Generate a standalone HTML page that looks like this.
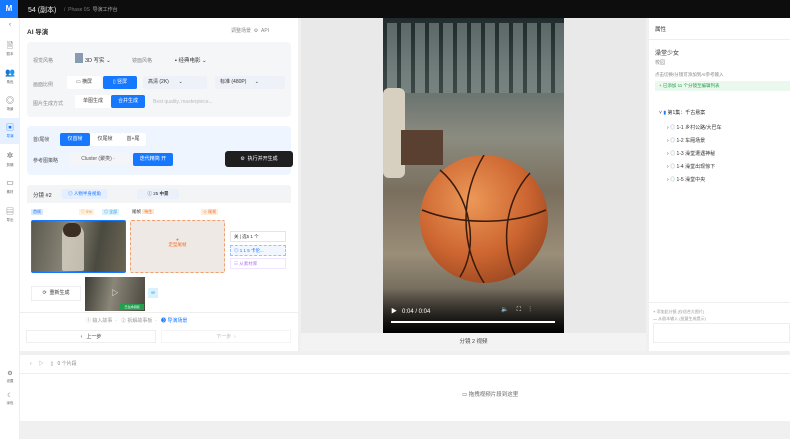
<!DOCTYPE html><html><head><meta charset="utf-8"><style>
*{box-sizing:border-box;margin:0;padding:0}
body{width:790px;height:421px;overflow:hidden;background:#f0f0f0;font-family:"Liberation Sans","Noto Sans CJK SC",sans-serif;font-size:6px;color:#333;position:relative}
.a{position:absolute}
.top{left:0;top:0;width:790px;height:18px;background:#0d0d0d;color:#ddd}
.side{left:0;top:0;width:20px;height:421px;background:#fff;border-right:1px solid #eee}
.lbl{font-size:3.5px;color:#666;text-align:center;width:20px}
.btn{position:absolute;border-radius:2px;font-size:5px;line-height:13px;height:13px;text-align:center}
.blue{background:#1677ff;color:#fff}
.wh{background:#fff;color:#444}
.gr{color:#888;font-size:5px}
</style></head><body>
<div class="a top">
 <div class="a" style="left:0;top:0;width:18px;height:18px;background:#1677ff;color:#fff;font-weight:bold;font-size:8px;line-height:18px;text-align:center">M</div>
 <div class="a" style="left:28px;top:5px;font-size:7px;color:#eee">54 (副本)</div>
 <div class="a" style="left:64px;top:6px;font-size:5px;color:#777">/ &nbsp;Phase 0S &nbsp;<span style="color:#aaa">导演工作台</span></div>
</div>
<div class="a side" style="top:18px">
 <div class="a lbl" style="top:4px;font-size:6px">‹</div>
 <div class="a lbl" style="top:22px;font-size:8px">🗎</div><div class="a lbl" style="top:34px">剧本</div>
 <div class="a lbl" style="top:50px;font-size:8px">👥</div><div class="a lbl" style="top:62px">角色</div>
 <div class="a lbl" style="top:77px;font-size:8px">◎</div><div class="a lbl" style="top:89px">场景</div>
 <div class="a" style="left:0;top:100px;width:20px;height:26px;background:#e6f0ff"></div>
 <div class="a lbl" style="top:104px;font-size:8px;color:#1677ff">▣</div><div class="a lbl" style="top:116px;color:#1677ff">导演</div>
 <div class="a lbl" style="top:133px;font-size:8px">✲</div><div class="a lbl" style="top:145px">剪辑</div>
 <div class="a lbl" style="top:160px;font-size:8px">▭</div><div class="a lbl" style="top:172px">素材</div>
 <div class="a lbl" style="top:188px;font-size:8px">▤</div><div class="a lbl" style="top:200px">导出</div>
 <div class="a lbl" style="top:352px;font-size:6px">⚙</div><div class="a lbl" style="top:361px">设置</div>
 <div class="a lbl" style="top:374px;font-size:6px">☾</div><div class="a lbl" style="top:383px">深色</div>
</div>
<!-- left panel -->
<div class="a" style="left:20px;top:18px;width:278px;height:333px;background:#fff">
 <div class="a" style="left:7px;top:8px;font-size:6.5px;font-weight:bold">AI 导演</div>
 <div class="a gr" style="left:211px;top:9px">调整场景 &nbsp;⚙ &nbsp;API</div>
 <div class="a" style="left:7px;top:24px;width:264px;height:75px;background:#f5f6f8;border-radius:4px">
  <div class="a gr" style="left:6px;top:15px">视觉风格</div>
  <div class="a" style="left:48px;top:11px;width:8px;height:10px;background:#8a9ab0"></div>
  <div class="a" style="left:58px;top:14px;font-size:5.5px">3D 写实 ⌄</div>
  <div class="a gr" style="left:105px;top:15px">镜面风格</div>
  <div class="a" style="left:148px;top:14px;font-size:5.5px">▪ 经典电影 ⌄</div>
  <div class="a gr" style="left:6px;top:39px">画面比例</div>
  <div class="btn wh" style="left:40px;top:34px;width:34px">▭ 横屏</div>
  <div class="btn blue" style="left:76px;top:34px;width:34px">▯ 竖屏</div>
  <div class="btn" style="left:116px;top:34px;width:64px;text-align:left;padding-left:5px;background:#eef2f8">高清 (2K) &nbsp; &nbsp; &nbsp; ⌄</div>
  <div class="btn" style="left:188px;top:34px;width:70px;text-align:left;padding-left:5px;background:#eef2f8">标准 (480P) &nbsp; &nbsp; &nbsp;⌄</div>
  <div class="a gr" style="left:6px;top:58px">图片生成方式</div>
  <div class="btn wh" style="left:48px;top:53px;width:36px">单图生成</div>
  <div class="btn blue" style="left:84px;top:53px;width:34px">合并生成</div>
  <div class="a" style="left:126px;top:57px;font-size:5px;color:#bbb">Best quality, masterpiece...</div>
 </div>
 <div class="a" style="left:7px;top:108px;width:264px;height:49px;background:#eef5ff;border-radius:4px">
  <div class="a gr" style="left:6px;top:10px;color:#555">首/尾帧</div>
  <div class="btn blue" style="left:33px;top:7px;width:30px">仅首帧</div>
  <div class="btn wh" style="left:63px;top:7px;width:30px">仅尾帧</div>
  <div class="btn wh" style="left:93px;top:7px;width:26px">首+尾</div>
  <div class="a gr" style="left:6px;top:31px;color:#555">参考图策略</div>
  <div class="btn" style="left:40px;top:27px;width:62px;background:#f3f5f8;color:#555">Cluster (聚类) ·</div>
  <div class="btn blue" style="left:106px;top:27px;width:40px">迭代精简 开</div>
  <div class="btn" style="left:198px;top:25px;width:68px;height:16px;line-height:16px;background:#1f1f1f;color:#fff;border-radius:3px">⚙ &nbsp;执行并开生成</div>
 </div>
 <div class="a" style="left:7px;top:167px;width:264px;height:18px;background:#f3f4f6;border-radius:3px 3px 0 0">
  <div class="a" style="left:6px;top:6px;font-size:5.5px">分镜 #2</div>
  <div class="a" style="left:35px;top:4px;width:45px;height:10px;background:#e6efff;color:#1677ff;font-size:4.5px;line-height:10px;text-align:center">◎ 人物半身视角</div>
  <div class="a" style="left:110px;top:4px;width:42px;height:10px;background:#eaf1fb;font-size:4.5px;line-height:10px;text-align:center">ⓘ 25 <b>中景</b></div>
 </div>
 <div class="a" style="left:11px;top:191px;font-size:4px;background:#dceaff;color:#1677ff;padding:0 2px">首帧</div>
 <div class="a" style="left:59px;top:191px;font-size:4px;background:#fff1e0;color:#e88a2d;padding:0 2px">♡ 5%</div>
 <div class="a" style="left:82px;top:191px;font-size:4px;background:#dff3ff;color:#2a9fd6;padding:0 2px">◎ 全部</div>
 <div class="a" style="left:112px;top:191px;font-size:4.5px">尾帧 <span style="background:#ffe7d6;color:#f07030;padding:0 2px;font-size:4px">待生</span></div>
 <div class="a" style="left:181px;top:191px;font-size:4px;background:#ffeede;color:#f07030;padding:0 2px">☆ 尾帧</div>
 <div class="a" style="left:11px;top:202px;width:95px;height:53px;border:1px solid #1677ff;border-radius:2px;background:linear-gradient(100deg,#5c5a50,#8a8777 40%,#4b4a40 70%,#6a6554);overflow:hidden">
  <div class="a" style="left:30px;top:4px;width:22px;height:46px;background:#d8d2c4;border-radius:9px 9px 2px 2px;opacity:.8"></div>
  <div class="a" style="left:31px;top:2px;width:18px;height:14px;background:#3d2e24;border-radius:8px"></div>
 </div>
 <div class="a" style="left:110px;top:202px;width:95px;height:53px;border:1px dashed #f0a070;border-radius:2px;background:#efe9e5;color:#f07030;font-size:4.5px;text-align:center;padding-top:16px">●<br>定型尾帧</div>
 <div class="a" style="left:210px;top:213px;width:56px;height:11px;border:1px solid #e5e5e5;font-size:4.5px;line-height:10px;padding-left:3px">关 | 选5 1 个</div>
 <div class="a" style="left:210px;top:227px;width:56px;height:11px;border:1px dashed #9bc1ff;background:#f2f7ff;color:#1677ff;font-size:4.5px;line-height:10px;padding-left:3px">◎ 1 1 5 卡伦...</div>
 <div class="a" style="left:210px;top:240px;width:56px;height:11px;border:1px solid #f0e6ff;color:#b57bf0;font-size:4.5px;line-height:10px;padding-left:3px">☷ 从素材库</div>
 <div class="a" style="left:11px;top:268px;width:50px;height:15px;border:1px solid #eee;font-size:5px;line-height:13px;text-align:center">⟳ &nbsp;重新生成</div>
 <div class="a" style="left:65px;top:259px;width:60px;height:34px;background:linear-gradient(100deg,#3e3c35,#8a8678 45%,#4a473e);color:#fff;font-size:7px;text-align:center;line-height:34px">▷</div>
 <div class="a" style="left:100px;top:286px;width:24px;height:6px;background:#22a050;color:#fff;font-size:3px;line-height:6px;text-align:center">已生成视频</div>
 <div class="a" style="left:128px;top:270px;width:10px;height:10px;background:#d9f1fb;color:#1677ff;font-size:5px;line-height:10px;text-align:center">∞</div>
 <div class="a" style="left:0;top:294px;width:278px;height:1px;background:#eee"></div>
 <div class="a gr" style="left:66px;top:299px;color:#999">① 输入故事 &nbsp;· &nbsp; ② 拆解故事板 &nbsp;· &nbsp; <span style="color:#1677ff">❸ 导演场景</span></div>
 <div class="a" style="left:6px;top:312px;width:130px;height:13px;border:1px solid #eee;font-size:5px;line-height:12px;text-align:center">‹ &nbsp; 上一步</div>
 <div class="a" style="left:141px;top:312px;width:130px;height:13px;border:1px solid #f4f4f4;font-size:5px;line-height:12px;text-align:center;color:#bbb">下一步 &nbsp;›</div>
</div>
<!-- middle -->
<div class="a" style="left:301px;top:18px;width:345px;height:333px;background:#e9e9e9">
 <div class="a" style="left:0;top:315px;width:345px;height:18px;background:#f3f3f3;font-size:5.5px;text-align:center;line-height:18px;color:#444">分镜 2 视频</div>
 <div class="a" style="left:82px;top:0;width:181px;height:315px;background:linear-gradient(180deg,#1f2a2c 0%,#5d6a68 18%,#8b8c80 38%,#7a6f5e 55%,#9a8e78 75%,#4a463f 100%);overflow:hidden">
  <div class="a" style="left:0;top:5px;width:181px;height:70px;background:repeating-linear-gradient(90deg,#1e2829 0 4px,#7f8d8b 4px 14px);opacity:.6"></div>
  <div class="a" style="left:0;top:70px;width:22px;height:90px;background:#d7cfbf;border-radius:6px"></div>
  <div class="a" style="left:18px;top:112px;width:42px;height:35px;background:#5a4030"></div>
  <div class="a" style="left:37px;top:137px;width:128px;height:128px;border-radius:50%;background:radial-gradient(circle at 40% 35%,#ec9858,#cc6530 50%,#7a3418 100%)"></div>
  <svg class="a" style="left:37px;top:137px" width="128" height="128"><g fill="none" stroke="#3a1a0a" stroke-width="1.5"><path d="M64 0 C40 40 40 90 64 128"/><path d="M2 55 C40 70 90 70 126 55"/><path d="M20 15 C50 40 60 90 40 122"/><path d="M110 18 C85 45 80 90 95 120"/></g></svg>
  <div class="a" style="left:0;top:270px;width:181px;height:45px;background:linear-gradient(180deg,transparent,#000)"></div>
  <div class="a" style="left:8px;top:288px;color:#fff;font-size:6px">▶ &nbsp; 0:04 / 0:04</div>
  <div class="a" style="left:118px;top:288px;color:#fff;font-size:6px">🔈 &nbsp; &nbsp; ⛶ &nbsp; &nbsp; ⋮</div>
  <div class="a" style="left:8px;top:303px;width:164px;height:1.5px;background:#fff"></div>
 </div>
</div>
<!-- right -->
<div class="a" style="left:649px;top:18px;width:141px;height:333px;background:#fff">
 <div class="a" style="left:6px;top:7px;font-size:5.5px">属性</div>
 <div class="a" style="left:0;top:21px;width:141px;height:1px;background:#eee"></div>
 <div class="a" style="left:6px;top:30px;font-size:6px">澡堂少女</div>
 <div class="a gr" style="left:6px;top:41px">校园</div>
 <div class="a gr" style="left:6px;top:54px;font-size:4.5px">点击切换/分镜可添加到AI参考输入</div>
 <div class="a" style="left:6px;top:63px;width:135px;height:10px;background:#eaf8ee;color:#28a050;font-size:4.5px;line-height:10px;padding-left:4px">+ 已添加 11 个分镜至编辑列表</div>
 <div class="a" style="left:10px;top:91px;font-size:5px">˅ <span style="color:#1677ff">▮</span> 第1集：千古悬案</div>
 <div class="a" style="left:18px;top:104px;font-size:5px;line-height:13px">› <span style="color:#8ab">◎</span> 1-1 乡村公路/大巴车<br>› <span style="color:#8ab">◎</span> 1-2 车厢场景<br>› <span style="color:#8ab">◎</span> 1-3 澡堂遭遇神秘<br>› <span style="color:#8ab">◎</span> 1-4 澡堂出现惊下<br>› <span style="color:#8ab">◎</span> 1-5 澡堂中央</div>
 <div class="a" style="left:0;top:284px;width:141px;height:1px;background:#eee"></div>
 <div class="a" style="left:4px;top:290px;font-size:4px;color:#999;line-height:7px"><span style="color:#28a050">+</span> 添加此分镜 (仅适合大图片)<br><span style="color:#1677ff">—</span> 从剧本输入 (批量生成提示)</div>
 <div class="a" style="left:4px;top:305px;width:137px;height:20px;border:1px solid #eee"></div>
</div>
<!-- bottom -->
<div class="a" style="left:20px;top:355px;width:770px;height:66px;background:#fff">
 <div class="a" style="left:0;top:0;width:770px;height:19px;border-bottom:1px solid #eee;font-size:5px;color:#888;line-height:19px;padding-left:10px">‹ &nbsp; &nbsp; ▷ &nbsp; &nbsp; ▯ &nbsp; 0 个片段</div>
 <div class="a" style="left:442px;top:35px;font-size:5.5px;color:#666">▭ 拖拽视频片段到这里</div>
</div>
</body></html>
